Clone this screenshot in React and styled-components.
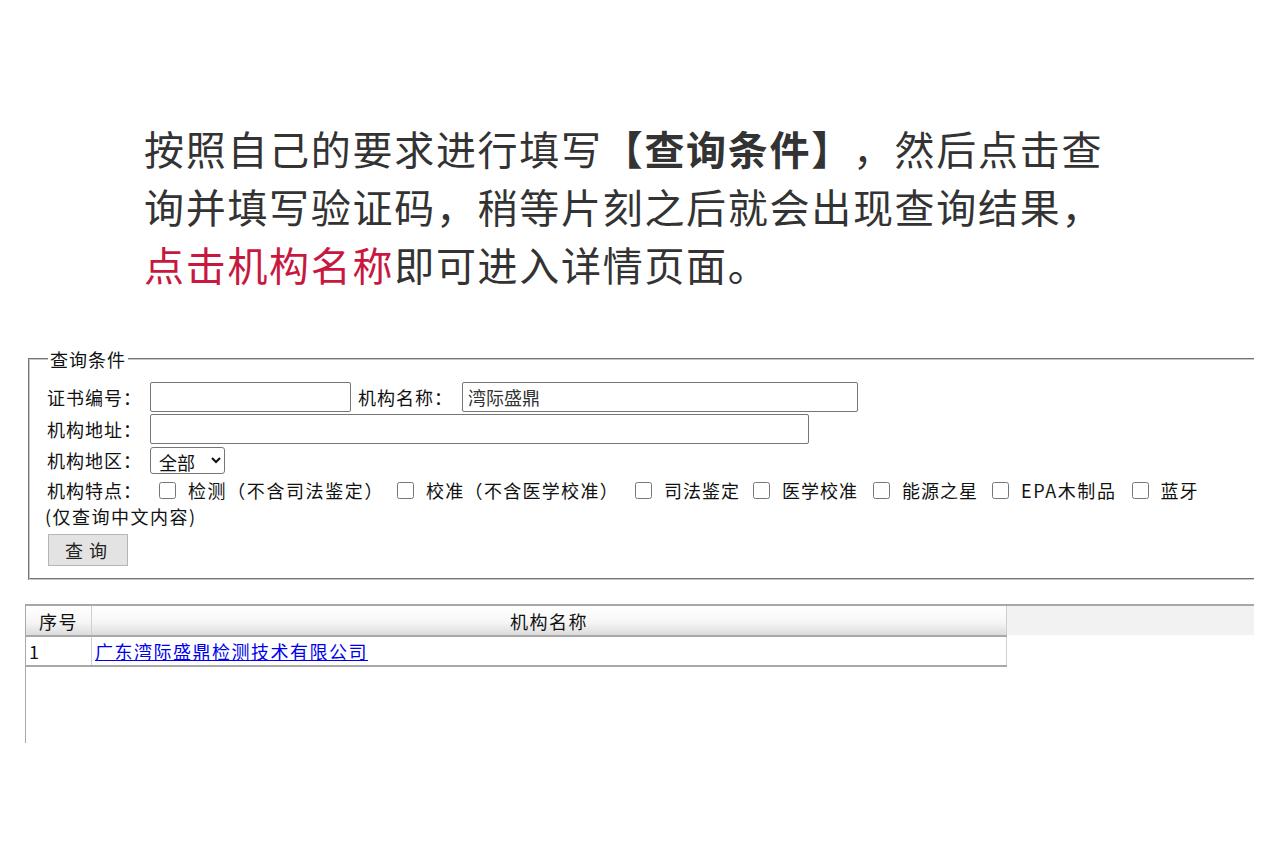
import styled, { createGlobalStyle } from 'styled-components';

const GlobalStyle = createGlobalStyle`
  html, body {
    margin: 0;
    padding: 0;
    background: #fff;
  }
  body {
    font-family: "Noto Sans CJK SC", "Noto Sans", sans-serif;
    color: #222;
    text-spacing-trim: space-all;
  }
`;

const Page = styled.div`
  width: 1280px;
  height: 848px;
  overflow: hidden;
  padding-top: 119px;
  box-sizing: border-box;
`;

const Intro = styled.p`
  margin: 0 0 0 144px;
  font-size: 40px;
  line-height: 58px;
  letter-spacing: 1.7px;
  color: #333;
  text-spacing-trim: space-all;

  strong {
    font-weight: 700;
  }

  .hl {
    color: #c8183f;
  }
`;

const Query = styled.fieldset`
  margin: 56px 26px 0 28px;
  padding: 11px 0 12px 17px;
  border: 2px groove #c8c8c8;
  border-right: none;
  font-size: 18px;
  letter-spacing: 1px;
  color: #111;

  legend {
    padding: 0 2px;
    margin-left: 1px;
    font-size: 18px;
    line-height: 20px;
  }
`;

const Row = styled.div`
  display: flex;
  align-items: center;
  min-height: ${(p) => p.$h || 32}px;
`;

const Label = styled.span`
  flex: none;
  width: ${(p) => (p.$auto ? 'auto' : '103px')};
  white-space: nowrap;
  margin-right: ${(p) => p.$mr || 0}px;
`;

const TextInput = styled.input`
  box-sizing: border-box;
  width: ${(p) => p.$w}px;
  height: 30px;
  margin-right: ${(p) => p.$mr || 0}px;
  border: 1px solid #767676;
  border-radius: 2px;
  padding: 0 5px;
  font-family: "Noto Sans CJK SC", sans-serif;
  font-size: 18px;
  color: #333;
  background: #fff;
  outline: none;
`;

const Select = styled.select`
  box-sizing: border-box;
  width: 75px;
  height: 27px;
  border: 1px solid #767676;
  border-radius: 3px;
  padding: 0 2px 0 4px;
  font-family: "Noto Sans CJK SC", sans-serif;
  font-size: 18px;
  color: #111;
  background: #fff;
`;

const CheckGroup = styled.div`
  display: flex;
  align-items: center;
`;

const Check = styled.label`
  display: flex;
  align-items: center;
  margin-right: ${(p) => p.$mr || 0}px;
  white-space: nowrap;
  letter-spacing: ${(p) => p.$ls || 1}px;

  input {
    width: 17px;
    height: 17px;
    margin: 0 12px 0 0;
  }
`;

const Note = styled.div`
  margin-left: -2px;
  line-height: 22px;
  letter-spacing: 1.5px;
`;

const Button = styled.button`
  width: 80px;
  height: 32px;
  margin: 7px 0 0 1px;
  border: 1px solid #b5b5b5;
  background: #e3e3e3;
  font-family: "Noto Sans CJK SC", sans-serif;
  font-size: 18px;
  letter-spacing: 6px;
  padding-left: 8px;
  color: #222;
`;

const Results = styled.div`
  margin: 24px 26px 0 25px;
  height: 137px;
  border-top: 2px solid #a8a8a8;
  border-left: 1px solid #a8a8a8;
  background: linear-gradient(#f2f2f2, #f2f2f2) top / 100% 29px no-repeat;
`;

const Table = styled.table`
  width: 981px;
  border-collapse: collapse;
  font-size: 18px;
  letter-spacing: 1.5px;
  color: #111;
`;

const HeadCell = styled.th`
  height: 29px;
  padding: 0;
  font-weight: 400;
  text-align: center;
  width: ${(p) => p.$w || 'auto'};
  background: linear-gradient(#ffffff 0%, #f6f6f6 55%, #dcdcdc 100%);
  border-left: ${(p) => (p.$first ? 'none' : '1px solid #cfcfcf')};
  border-right: 1px solid #cfcfcf;
  border-bottom: 2px solid #a8a8a8;
`;

const Cell = styled.td`
  height: 28px;
  padding: 0 3px;
  border-bottom: 2px solid #a8a8a8;
  border-left: ${(p) => (p.$first ? 'none' : '1px solid #cfcfcf')};
  border-right: 1px solid #cfcfcf;
  background: #fff;

  a {
    color: #0000ee;
    text-decoration: underline;
  }
`;

const features = [
  { text: '检测（不含司法鉴定）', mr: 13, ls: 1.6 },
  { text: '校准（不含医学校准）', mr: 16, ls: 1.3 },
  { text: '司法鉴定', mr: 13 },
  { text: '医学校准', mr: 15 },
  { text: '能源之星', mr: 14 },
  { text: 'EPA木制品', mr: 15, ls: 1.6 },
  { text: '蓝牙', mr: 0 },
];

export default function App() {
  return (
    <Page>
      <GlobalStyle />
      <Intro>
        按照自己的要求进行填写<strong>【查询条件】</strong>，然后点击查
        <br />
        询并填写验证码，稍等片刻之后就会出现查询结果，
        <br />
        <span className='hl'>点击机构名称</span>即可进入详情页面。
      </Intro>

      <Query>
        <legend>查询条件</legend>
        <Row $h={33}>
          <Label>证书编号：</Label>
          <TextInput $w={201} $mr={7} />
          <Label $auto $mr={9}>机构名称：</Label>
          <TextInput $w={396} defaultValue='湾际盛鼎' />
        </Row>
        <Row>
          <Label>机构地址：</Label>
          <TextInput $w={659} />
        </Row>
        <Row $h={30}>
          <Label>机构地区：</Label>
          <Select defaultValue='all'>
            <option value='all'>全部</option>
          </Select>
        </Row>
        <Row $h={30}>
          <Label $auto $mr={17}>机构特点：</Label>
          <CheckGroup>
            {features.map((f) => (
              <Check key={f.text} $mr={f.mr} $ls={f.ls}>
                <input type='checkbox' />
                {f.text}
              </Check>
            ))}
          </CheckGroup>
        </Row>
        <Note>(仅查询中文内容)</Note>
        <Button>查询</Button>
      </Query>

      <Results>
        <Table>
          <thead>
            <tr>
              <HeadCell $first $w='65px'>序号</HeadCell>
              <HeadCell>机构名称</HeadCell>
            </tr>
          </thead>
          <tbody>
            <tr>
              <Cell $first>1</Cell>
              <Cell>
                <a href='#'>广东湾际盛鼎检测技术有限公司</a>
              </Cell>
            </tr>
          </tbody>
        </Table>
      </Results>
    </Page>
  );
}
